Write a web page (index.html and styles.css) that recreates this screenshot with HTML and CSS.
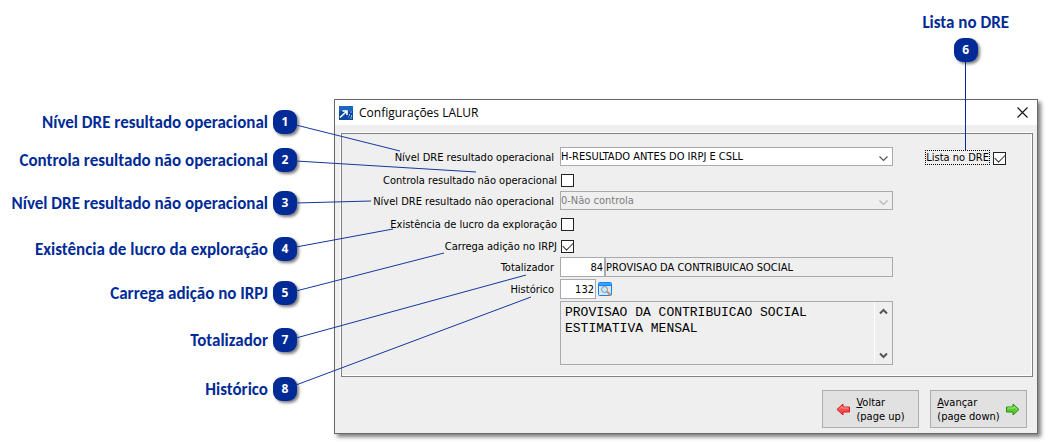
FILE: index.html
```html
<!DOCTYPE html>
<html lang="pt-BR">
<head>
<meta charset="utf-8">
<title>Configurações LALUR</title>
<link rel="stylesheet" href="styles.css">
</head>
<body>
<main class="stage">
  <header class="top-callout">
    <div class="callout-stack">
      <span class="callout-text">Lista no DRE</span>
      <span class="badge badge-down">6</span>
    </div>
  </header>
  <ul class="callouts">
    <li class="callout"><span class="callout-text">Nível DRE resultado operacional</span><span class="badge">1</span></li>
    <li class="callout"><span class="callout-text">Controla resultado não operacional</span><span class="badge">2</span></li>
    <li class="callout"><span class="callout-text">Nível DRE resultado não operacional</span><span class="badge">3</span></li>
    <li class="callout"><span class="callout-text">Existência de lucro da exploração</span><span class="badge">4</span></li>
    <li class="callout"><span class="callout-text">Carrega adição no IRPJ</span><span class="badge">5</span></li>
    <li class="callout"><span class="callout-text">Totalizador</span><span class="badge">7</span></li>
    <li class="callout"><span class="callout-text">Histórico</span><span class="badge">8</span></li>
  </ul>
  <section class="window">
    <div class="titlebar">
      <svg class="app-icon" width="14" height="14" viewBox="0 0 14 14" aria-hidden="true">
        <rect width="14" height="14" fill="#0b489f"/>
        <rect width="14" height="5" fill="#1d65bd"/>
        <path d="M1 11.5 L7.5 5.5 M3.5 5 H8 V9" fill="none" stroke="#fff" stroke-width="1.6"/>
        <path d="M12 5v2M10.500 8v2M12.500 9v2M9 11h1M11 12h2" stroke="#8fb6e3" stroke-width="1"/>
      </svg>
      <h1 class="title">Configurações LALUR</h1>
      <button class="close" type="button" aria-label="Fechar">
        <svg width="11" height="11" viewBox="0 0 11 11"><path d="M.5 .5 L10.500 10.500 M10.500 .5 L.5 10.500" stroke="#111" stroke-width="1.1"/></svg>
      </button>
    </div>
    <form class="body">
      <div class="panel">
        <div class="fields">
          <label for="nivel">Nível DRE resultado operacional</label>
          <div class="combo">
            <select id="nivel"><option>H-RESULTADO ANTES DO IRPJ E CSLL</option></select>
            <svg class="chevron" width="9" height="6" viewBox="0 0 9 6"><path d="M.5 .5 L4.500 4.500 L8.500 .5" fill="none" stroke="#555" stroke-width="1.2"/></svg>
          </div>
          <label class="check-label" for="controla">Controla resultado não operacional</label>
          <input class="check" type="checkbox" id="controla">
          <label for="nivelnao">Nível DRE resultado não operacional</label>
          <div class="combo">
            <select id="nivelnao" disabled><option>0-Não controla</option></select>
            <svg class="chevron" width="9" height="6" viewBox="0 0 9 6"><path d="M.5 .5 L4.500 4.500 L8.500 .5" fill="none" stroke="#b5b5b5" stroke-width="1.2"/></svg>
          </div>
          <label class="check-label" for="lucro">Existência de lucro da exploração</label>
          <input class="check" type="checkbox" id="lucro">
          <label class="check-label" for="adicao">Carrega adição no IRPJ</label>
          <input class="check" type="checkbox" id="adicao" checked>
          <label for="total">Totalizador</label>
          <div class="pair">
            <input class="box number total" id="total" value="84">
            <input class="box description" aria-label="Descrição do totalizador" value="PROVISAO DA CONTRIBUICAO SOCIAL" readonly>
          </div>
          <label for="hist">Histórico</label>
          <div class="pair">
            <input class="box number hist" id="hist" value="132">
            <button class="lookup" type="button" aria-label="Pesquisar">
              <svg width="14" height="14" viewBox="0 0 14 14">
                <rect x=".5" y=".5" width="13" height="13" rx="1" fill="#d9e6fa" stroke="#1583ea"/>
                <path d="M1 2h12" stroke="#36a5ff" stroke-width="2"/>
                <path d="M1 3.500h12" stroke="#1583ea"/>
                <path d="M9 9.500l3.500 3.500" stroke="#e98243" stroke-width="2"/>
                <circle cx="6.500" cy="7.500" r="3" fill="#c2f0fa" stroke="#7e8ca0"/>
              </svg>
            </button>
          </div>
          <div class="memo">
            <textarea aria-label="Texto do histórico" readonly>PROVISAO DA CONTRIBUICAO SOCIAL
ESTIMATIVA MENSAL</textarea>
            <div class="scroll">
              <svg width="9" height="7" viewBox="0 0 9 7"><path d="M1 5.500 L4.500 2 L8 5.500" fill="none" stroke="#555" stroke-width="2"/></svg>
              <svg width="9" height="7" viewBox="0 0 9 7"><path d="M1 1.500 L4.500 5 L8 1.500" fill="none" stroke="#555" stroke-width="2"/></svg>
            </div>
          </div>
        </div>
        <div class="side">
          <label class="focused" for="lista">Lista no DRE</label>
          <input class="check" type="checkbox" id="lista" checked>
        </div>
      </div>
      <div class="actions">
        <button class="nav" type="button">
          <svg width="15" height="13" viewBox="0 0 15 13"><path d="M1 6.500 L7 1 V4 H13.500 V9 H7 V12 Z" fill="#ff4a4a" stroke="#c81e1e"/><path d="M3 6.500 L6 3.500 V5 H12.500" fill="none" stroke="#ff9c9c"/></svg>
          <span><u>V</u>oltar<br>(page up)</span>
        </button>
        <button class="nav" type="button">
          <span><u>A</u>vançar<br>(page down)</span>
          <svg width="15" height="13" viewBox="0 0 15 13"><path d="M14 6.500 L8 1 V4 H1.500 V9 H8 V12 Z" fill="#55cf2c" stroke="#2d8a1a"/><path d="M2.500 5 H9 V3.500 L12 6.500" fill="none" stroke="#a4ee83"/></svg>
        </button>
      </div>
    </form>
  </section>
  <svg class="leaders" width="560" height="445" viewBox="0 0 560 445" aria-hidden="true">
    <path d="M296 125L400 151M296 161L476 172M296 203L371 201M296 247L393 229M296 291L444 253M296 338L526 275M296 385L531 297"/>
  </svg>
</main>
</body>
</html>
```
FILE: styles.css
```css
* { box-sizing: border-box; }
body {
  margin: 0;
  background: #fff;
  color: #000;
  font: 11px/14px "DejaVu Sans Condensed", Tahoma, "DejaVu Sans", sans-serif;
}
.stage {
  position: relative;
  display: grid;
  grid-template-columns: 297px 1fr;
  grid-template-rows: 99px auto;
  column-gap: 37px;
  padding: 0 13px 11px 0;
}
.top-callout {
  grid-column: 1 / -1;
  display: flex;
  justify-content: flex-end;
  padding: 13px 29px 0 0;
}
.callout-stack {
  display: flex;
  flex-direction: column;
  align-items: center;
  gap: 5px;
}
.callout-text {
  color: #002b96;
  font: bold 17px/20px Carlito, Calibri, "Open Sans", sans-serif;
  white-space: nowrap;
}
.badge {
  flex: none;
  position: relative;
  width: 24px;
  height: 24px;
  border-radius: 9px;
  background: #002b96;
  color: #fff;
  font: bold 12px/24px "Open Sans", sans-serif;
  text-align: center;
  box-shadow: 2px 2px 3px rgba(0, 0, 0, .5);
}
.badge-down::after {
  content: "";
  position: absolute;
  z-index: 2;
  top: 100%;
  left: 11px;
  width: 1px;
  height: 89px;
  background: #002b96;
}
.callouts {
  display: grid;
  grid-template-rows: 38px 43px 46px 44px 47px 49px 24px;
  margin: 0;
  padding: 11px 0 0;
  list-style: none;
}
.callout {
  display: flex;
  align-items: center;
  justify-content: flex-end;
  gap: 5px;
  height: 24px;
}
.callout .callout-text { padding-top: 2px; }
.window {
  display: flex;
  flex-direction: column;
  align-self: start;
  border: 1px solid #696969;
  background: #efefef;
  box-shadow: 3px 3px 4px rgba(0, 0, 0, .5);
}
.titlebar {
  display: flex;
  align-items: center;
  gap: 6px;
  height: 25px;
  padding: 0 9px 0 4px;
  background: #fff;
}
.title {
  flex: 1;
  margin: 0;
  font: 12px/16px "Open Sans", "Segoe UI", sans-serif;
}
button {
  font: inherit;
  color: inherit;
}
.close, .lookup {
  display: flex;
  padding: 0;
  border: 0;
  background: none;
}
.body {
  padding: 8px 4px 5px 6px;
}
.panel {
  display: flex;
  justify-content: space-between;
  padding: 13px 26px 11px 19px;
  border: 1px solid #808080;
  box-shadow: inset -1px -1px #fff, -1px -1px #fff;
}
.fields {
  display: grid;
  grid-template-columns: 193px 333px;
  grid-template-rows: repeat(7, 19px) 64px;
  gap: 3px 6px;
}
.fields > label {
  padding-top: 4px;
  text-align: right;
  white-space: nowrap;
}
.fields > .check-label {
  padding-top: 5px;
  margin-right: -3px;
}
.check {
  appearance: none;
  width: 13px;
  height: 13px;
  margin: 5px 0 0 1px;
  border: 1px solid #222;
  background: #fff;
}
.check:checked::before {
  content: "";
  display: block;
  width: 9px;
  height: 5px;
  margin: 1px 0 0 1px;
  border: solid #333;
  border-width: 0 0 1px 1px;
  transform: rotate(-45deg);
}
.combo {
  position: relative;
}
.combo select {
  appearance: none;
  display: block;
  width: 100%;
  height: 19px;
  padding: 0 20px 0 0;
  border: 1px solid #a9aab0;
  border-radius: 0;
  background: #fff;
  color: #000;
  font: inherit;
}
.combo select:disabled {
  background: #efefef;
  color: #7d7d7d;
  opacity: 1;
}
.chevron {
  position: absolute;
  right: 5px;
  top: 9px;
  pointer-events: none;
}
.pair {
  display: flex;
  align-items: center;
}
.box {
  height: 20px;
  padding: 1px 1px 0;
  border: 1px solid #a9aab0;
  background: #fff;
  color: #000;
  font: inherit;
}
.number { text-align: right; }
.total { width: 45px; }
.hist { width: 36px; margin-right: 2px; }
.description {
  flex: 1;
  min-width: 0;
  padding-left: 0;
  background: #efefef;
}
.memo {
  grid-column: 2;
  display: flex;
  border: 1px solid #a9aab0;
}
.memo textarea {
  flex: 1;
  min-width: 0;
  padding: 3px 4px;
  border: 0;
  background: none;
  color: #000;
  font: 13px/16px "Liberation Mono", "Courier New", monospace;
  resize: none;
  overflow: hidden;
}
.scroll {
  display: flex;
  flex-direction: column;
  justify-content: space-between;
  align-items: center;
  width: 18px;
  padding: 6px 0 5px;
  border-left: 1px solid #fff;
}
.side {
  display: flex;
  align-items: flex-start;
  gap: 3px;
  padding-top: 4px;
}
.focused {
  outline: 1px dotted #000;
  line-height: 13px;
}
.side .check { margin-top: 1px; }
.actions {
  display: flex;
  justify-content: flex-end;
  gap: 11px;
  padding: 13px 6px 0 0;
}
.nav {
  display: flex;
  align-items: center;
  justify-content: center;
  gap: 5px;
  width: 97px;
  height: 38px;
  padding: 1px 0 0;
  border: 1px solid #adadad;
  background: #e1e1e1;
  text-align: left;
}
.leaders {
  position: absolute;
  top: 0;
  left: 0;
  pointer-events: none;
  fill: none;
  stroke: #12389f;
  stroke-width: 1;
}
```
